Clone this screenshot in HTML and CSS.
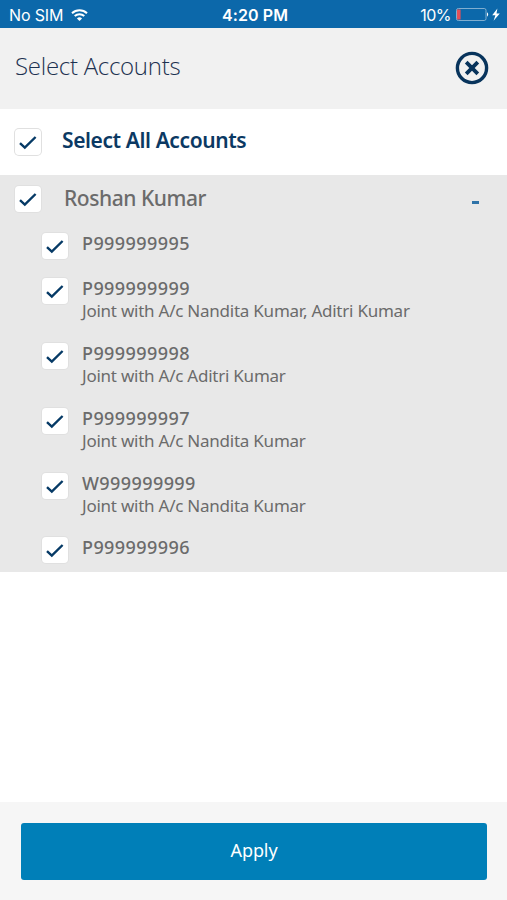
FILE: index.html
```html
<!DOCTYPE html>
<html lang="en">

<head>
    <meta charset="UTF-8">
    <meta name="viewport" content="width=device-width, initial-scale=1.0">
    <title>Select Accounts</title>
    <link rel="stylesheet" href="styles.css">
</head>

<body>
    <svg class="symbols" width="0" height="0">
        <symbol id="tick" viewBox="0 0 26 26">
            <path d="M5 14.2l4.8 4.4L20.6 8" fill="none" stroke="#063a66" stroke-width="2.4" />
        </symbol>
    </svg>

    <div id="app">
        <div class="status">
            <div class="carrier">
                <span>No SIM</span>
                <svg width="17" height="13" viewBox="0 0 17 13" fill="none" stroke="#fff" stroke-width="2">
                    <path d="M1 4.2a10.8 10.8 0 0 1 15 0M3.7 7.1a7 7 0 0 1 9.6 0" />
                    <path d="M8.5 12L5.9 9.4a3.8 3.8 0 0 1 5.2 0z" fill="#fff" stroke="none" />
                </svg>
            </div>
            <span class="time">4:20 PM</span>
            <div class="battery">
                <span>10%</span>
                <svg width="46" height="16" viewBox="0 0 46 16">
                    <rect x="1.5" y="1.5" width="29.5" height="12" rx="1.8" fill="none" stroke="#7faed0" />
                    <path d="M2 2.5h3.6v10H2z" fill="#e2505a" />
                    <path d="M32 5.3q2.4 2.2 0 4.4z" fill="#fff" />
                    <path d="M42.4 1.5L37.2 8.2h3.2L38.6 13.7l6.2-7.2h-3.3z" fill="#fff" />
                </svg>
            </div>
        </div>

        <header>
            <h1>Select Accounts</h1>
            <svg class="close" width="34" height="34" viewBox="0 0 34 34" fill="none" stroke="#08345c">
                <circle cx="17" cy="17" r="14.6" stroke-width="3.4" />
                <path d="M11.2 11.2l11.6 11.6M22.8 11.2L11.2 22.8" stroke-width="3.8" />
            </svg>
        </header>

        <div class="all">
            <svg class="check"><use href="#tick" /></svg>
            <span>Select All Accounts</span>
        </div>

        <div class="group">
            <div class="owner">
                <svg class="check"><use href="#tick" /></svg>
                <span class="name">Roshan Kumar</span>
                <span class="toggle"></span>
            </div>

            <div class="accounts">
                <div class="account">
                    <svg class="check"><use href="#tick" /></svg>
                    <div class="number">P999999995</div>
                </div>
                <div class="account">
                    <svg class="check"><use href="#tick" /></svg>
                    <div>
                        <div class="number">P999999999</div>
                        <div class="joint">Joint with A/c Nandita Kumar, Aditri Kumar</div>
                    </div>
                </div>
                <div class="account">
                    <svg class="check"><use href="#tick" /></svg>
                    <div>
                        <div class="number">P999999998</div>
                        <div class="joint">Joint with A/c Aditri Kumar</div>
                    </div>
                </div>
                <div class="account">
                    <svg class="check"><use href="#tick" /></svg>
                    <div>
                        <div class="number">P999999997</div>
                        <div class="joint">Joint with A/c Nandita Kumar</div>
                    </div>
                </div>
                <div class="account">
                    <svg class="check"><use href="#tick" /></svg>
                    <div>
                        <div class="number">W999999999</div>
                        <div class="joint">Joint with A/c Nandita Kumar</div>
                    </div>
                </div>
                <div class="account">
                    <svg class="check"><use href="#tick" /></svg>
                    <div class="number">P999999996</div>
                </div>
            </div>
        </div>

        <footer>
            <button>Apply</button>
        </footer>
    </div>
</body>

</html>
```
FILE: styles.css
```css
* {
    padding: 0;
    margin: 0;
    box-sizing: border-box;
}

.symbols {
    display: none;
}

#app {
    height: 100vh;
    background-color: white;
    display: flex;
    flex-direction: column;
    font-family: "Noto Sans", "Open Sans", sans-serif;
    color: #6b6b6b;
    white-space: nowrap;
}

.status {
    height: 28px;
    padding: 2px 6px 0 9px;
    background-color: #0c68aa;
    color: white;
    display: grid;
    grid-template-columns: 213px auto 1fr;
    align-items: center;
    font-family: Inter, sans-serif;
    font-size: 16px;
    letter-spacing: -0.15px;
}

.carrier,
.battery {
    display: flex;
    align-items: center;
    gap: 8px;
}

.battery {
    justify-content: flex-end;
    gap: 4px;
    letter-spacing: -0.5px;
}

.time {
    font-weight: 600;
    letter-spacing: 0.1px;
}

header {
    height: 81px;
    padding: 0 18px 0 15px;
    background-color: #f1f1f1;
    display: flex;
    align-items: center;
    justify-content: space-between;
}

h1 {
    font-family: "Open Sans", sans-serif;
    font-size: 24px;
    font-weight: 300;
    line-height: 30px;
    letter-spacing: -0.27px;
    margin-bottom: 6px;
    color: #1d3150;
}

.close {
    margin-bottom: 1px;
}

.check {
    width: 26px;
    height: 26px;
    flex: none;
    border-radius: 4px;
    background-color: white;
    box-shadow: 0 0 0 1px #e0e0e0;
}

.all {
    height: 66px;
    padding-left: 15px;
    display: flex;
    align-items: center;
    gap: 21px;
    font-size: 21px;
    font-weight: 600;
    letter-spacing: -0.4px;
    color: #0b3963;
}

.all span {
    margin-bottom: 4px;
}

.group {
    height: 397px;
    background-color: #e8e8e8;
}

.owner {
    height: 48px;
    padding: 0 28px 0 15px;
    display: flex;
    align-items: center;
    font-size: 21px;
    font-weight: 500;
    letter-spacing: -0.45px;
}

.name {
    margin: 0 0 2px 23px;
}

.toggle {
    width: 7px;
    height: 3px;
    margin: 7px 0 0 auto;
    background-color: #2f73a8;
}

.accounts {
    padding: 9px 0 0 42px;
    display: flex;
    flex-direction: column;
    gap: 20.7px;
}

.account {
    min-height: 24.8px;
    display: flex;
    gap: 14px;
}

.account .check {
    margin: 1px 0 -3px;
}

.number {
    font-size: 18px;
    font-weight: 500;
    line-height: 22px;
    letter-spacing: 0.42px;
}

.joint {
    font-size: 17px;
    line-height: 23px;
    letter-spacing: -0.24px;
    margin-bottom: -1px;
}

footer {
    height: 98px;
    margin-top: auto;
    padding: 21px 20px 20px 21px;
    background-color: #f6f6f6;
}

button {
    width: 100%;
    height: 57px;
    padding-bottom: 4px;
    border: none;
    border-radius: 3px;
    background-color: #007fb8;
    color: white;
    font-family: inherit;
    font-size: 18px;
    letter-spacing: -0.1px;
}
```
